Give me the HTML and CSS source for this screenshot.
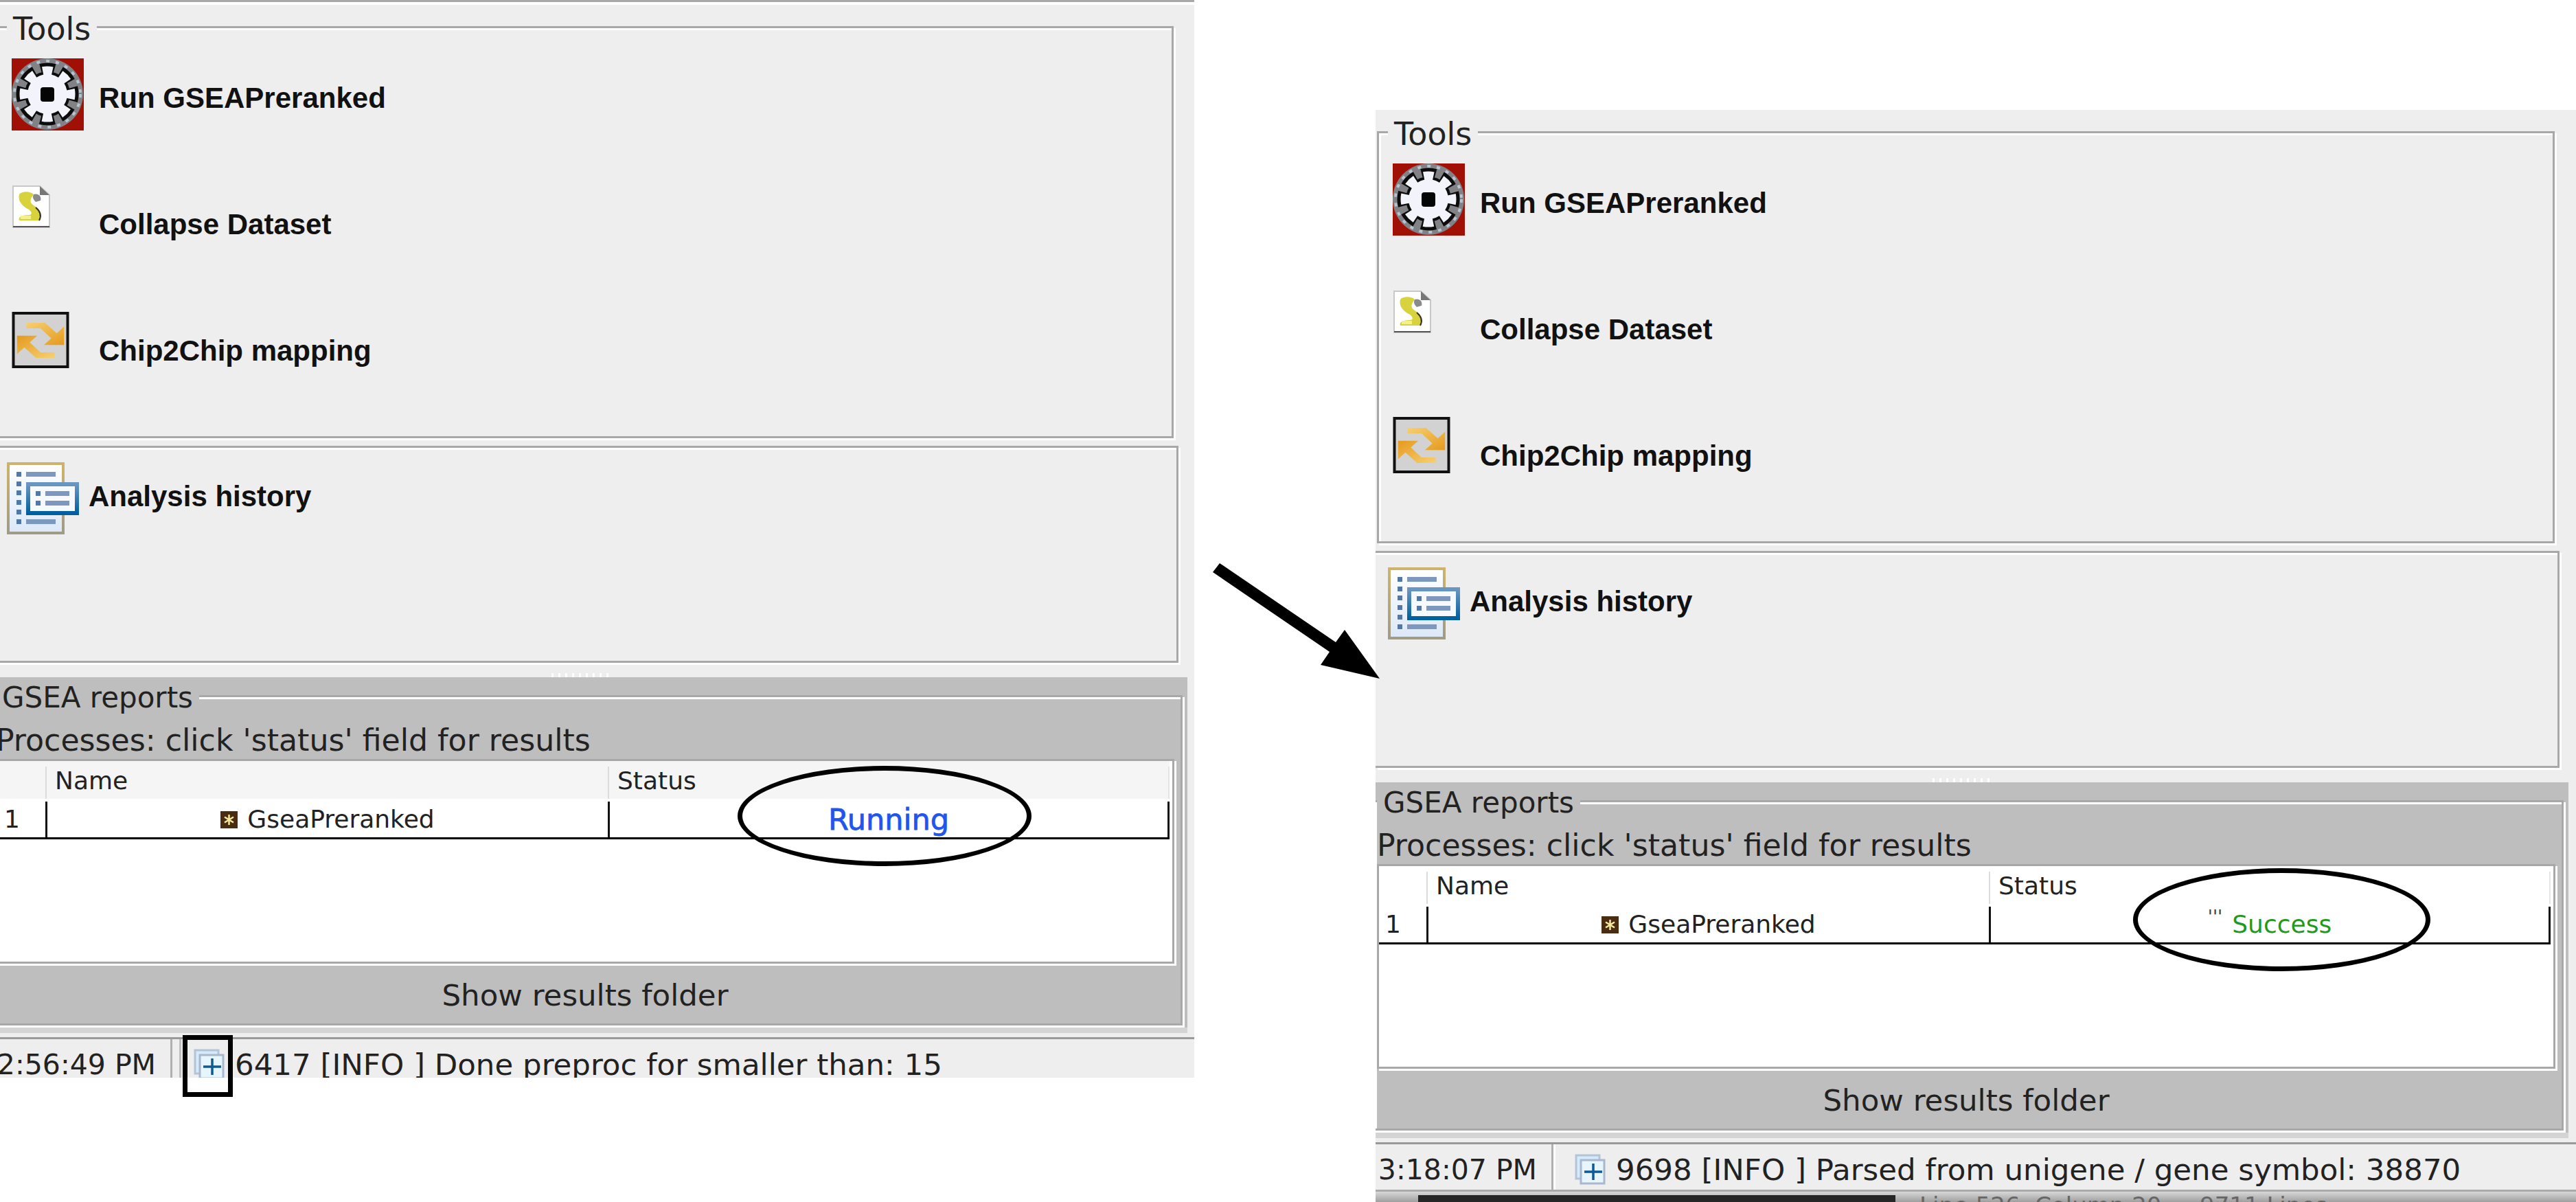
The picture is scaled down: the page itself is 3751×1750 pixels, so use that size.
FILE: index.html
```html
<!DOCTYPE html>
<html>
<head>
    <title>GSEA preranked run</title>
    <link rel="stylesheet" href="styles.css">
</head>
<body>
<svg class="defs" width="0" height="0">
    <defs>
        <linearGradient id="goldEdge" x1="0" y1="0" x2="0" y2="1">
            <stop offset="0" stop-color="#cdb36c"/>
            <stop offset="1" stop-color="#a09b86"/>
        </linearGradient>
        <linearGradient id="blueEdge" x1="0" y1="0" x2="0" y2="1">
            <stop offset="0" stop-color="#6a96c2"/>
            <stop offset="1" stop-color="#00609f"/>
        </linearGradient>
        <linearGradient id="pageFill" x1="0" y1="0" x2="0" y2="1">
            <stop offset="0" stop-color="#ffffff"/>
            <stop offset="1" stop-color="#dbe8f8"/>
        </linearGradient>
        <linearGradient id="arrowFill" x1="0" y1="0" x2="1" y2="1">
            <stop offset="0" stop-color="#f6d070"/>
            <stop offset="1" stop-color="#e59a1e"/>
        </linearGradient>
    </defs>
    <symbol id="icon-gear" viewBox="0 0 105 105">
        <rect width="105" height="105" fill="#a01005"/>
        <circle cx="52" cy="52" r="52" fill="#828286"/>
        <circle cx="52" cy="52" r="48" fill="none" stroke="#b4c4d2" stroke-width="4" stroke-dasharray="5 9"/>
        <circle cx="52" cy="52" r="33" fill="#0c0c0c"/>
        <circle cx="52" cy="52" r="39" fill="none" stroke="#0c0c0c" stroke-width="13" stroke-dasharray="21 9.630" stroke-dashoffset="10.500"/>
        <circle cx="52" cy="52" r="29" fill="#f3f3fb"/>
        <circle cx="52" cy="52" r="34" fill="none" stroke="#f3f3fb" stroke-width="13" stroke-dasharray="14 12.700" stroke-dashoffset="7"/>
        <rect x="42" y="42" width="20" height="21" rx="4" fill="#050505"/>
    </symbol>
    <symbol id="icon-scroll" viewBox="0 0 55 62">
        <path d="M1 1H40L54 14V61H1Z" fill="#fff" stroke="#c8c8c8" stroke-width="2"/>
        <path d="M40 1V14H54Z" fill="#777"/>
        <path d="M1 60H54" stroke="#555" stroke-width="2"/>
        <path d="M10 13C14 8 26 8 31 13C26 20 24 24 31 29C39 34 45 40 39 51L10 51C8 46 14 43 24 43C29 43 29 39 24 35C12 29 8 21 10 13Z" fill="#d8d23c"/>
        <path d="M31 13C37 11 43 15 41 22L34 24C30 20 29 17 31 13Z" fill="#8a8a8a"/>
        <path d="M39 51C43 44 41 38 34 32" fill="none" stroke="#333" stroke-width="2"/>
        <rect x="12" y="44" width="15" height="5" fill="#f4f08c"/>
    </symbol>
    <symbol id="icon-chip" viewBox="0 0 250 247">
        <rect x="6" y="6" width="238" height="235" fill="#d2d2d2" stroke="#111" stroke-width="12"/>
        <path id="chipArrow" d="M63 48H145L196 94L228 65V145H140L172 116L125 72H63Z" fill="url(#arrowFill)"/>
        <use href="#chipArrow" transform="rotate(180 125 125)"/>
    </symbol>
    <symbol id="icon-history" viewBox="0 0 105 105">
        <rect x="2" y="2" width="80" height="101" fill="url(#pageFill)" stroke="url(#goldEdge)" stroke-width="4"/>
        <g fill="#4f78ad">
            <rect x="14" y="14" width="7" height="7"/>
            <rect x="14" y="28" width="7" height="7"/>
            <rect x="14" y="41" width="7" height="7"/>
            <rect x="14" y="55" width="7" height="7"/>
            <rect x="14" y="69" width="7" height="7"/>
            <rect x="14" y="83" width="7" height="7"/>
        </g>
        <rect x="28" y="14" width="43" height="7" fill="#7d98bf"/>
        <rect x="28" y="83" width="43" height="7" fill="#7d98bf"/>
        <rect x="31" y="32" width="71" height="42" fill="#f6f9fe" stroke="url(#blueEdge)" stroke-width="6"/>
        <rect x="42" y="42" width="7" height="7" fill="#4f78ad"/>
        <rect x="42" y="56" width="7" height="7" fill="#4f78ad"/>
        <rect x="56" y="42" width="35" height="7" fill="#7d98bf"/>
        <rect x="56" y="56" width="35" height="7" fill="#7d98bf"/>
    </symbol>
    <symbol id="icon-task" viewBox="0 0 25 25">
        <rect width="25" height="25" fill="#4a2c12"/>
        <path d="M12.500 5V20M6 8.500L19 16.500M19 8.500L6 16.500" stroke="#f5e9a0" stroke-width="2.500"/>
    </symbol>
    <symbol id="icon-log" viewBox="0 0 45 45">
        <rect x="2" y="2" width="34" height="34" fill="#d5eafa" stroke="#b4c3d8" stroke-width="3"/>
        <rect x="9" y="9" width="34" height="34" fill="#e6f5fe" stroke="#a9b8ce" stroke-width="3"/>
        <path d="M14 26H40M27 14V38" stroke="#0f5a96" stroke-width="3.500"/>
    </symbol>
</svg>

<div class="canvas">

    <div class="win win-left">
        <div class="win-body">
            <div class="topbar"></div>

            <fieldset class="etched tools">
                <legend class="legend-tools">Tools</legend>
                <div class="tool-row">
                    <div class="tool-icon"><svg class="ico-gear"><use href="#icon-gear"/></svg></div>
                    <span class="tool-label">Run GSEAPreranked</span>
                </div>
                <div class="tool-row">
                    <div class="tool-icon"><svg class="ico-scroll"><use href="#icon-scroll"/></svg></div>
                    <span class="tool-label">Collapse Dataset</span>
                </div>
                <div class="tool-row">
                    <div class="tool-icon"><svg class="ico-chip"><use href="#icon-chip"/></svg></div>
                    <span class="tool-label">Chip2Chip mapping</span>
                </div>
            </fieldset>

            <div class="etched history">
                <svg class="ico-history"><use href="#icon-history"/></svg>
                <span class="tool-label">Analysis history</span>
            </div>

            <div class="splitter"><div class="splitter-dots"></div></div>

            <div class="reports">
                <fieldset class="etched reports-box">
                    <legend class="legend-reports">GSEA reports</legend>
                    <div class="processes">Processes: click 'status' field for results</div>
                    <div class="etched table">
                        <div class="thead">
                            <div class="th"></div>
                            <div class="th">Name</div>
                            <div class="th">Status</div>
                        </div>
                        <div class="tr">
                            <div class="td td-num">1</div>
                            <div class="td td-center"><svg class="ico-task"><use href="#icon-task"/></svg>GseaPreranked</div>
                            <div class="td td-center status-running">Running</div>
                        </div>
                    </div>
                    <div class="show-btn">Show results folder</div>
                </fieldset>
            </div>

            <div class="statusbar">
                <div class="status-time">2:56:49 PM</div>
                <div class="status-log">
                    <svg class="ico-log"><use href="#icon-log"/></svg>
                    <span>6417 [INFO ] Done preproc for smaller than: 15</span>
                </div>
            </div>
        </div>
    </div>

    <div class="win win-right">
        <div class="win-body">
            <div class="topbar"></div>

            <fieldset class="etched tools">
                <legend class="legend-tools">Tools</legend>
                <div class="tool-row">
                    <div class="tool-icon"><svg class="ico-gear"><use href="#icon-gear"/></svg></div>
                    <span class="tool-label">Run GSEAPreranked</span>
                </div>
                <div class="tool-row">
                    <div class="tool-icon"><svg class="ico-scroll"><use href="#icon-scroll"/></svg></div>
                    <span class="tool-label">Collapse Dataset</span>
                </div>
                <div class="tool-row">
                    <div class="tool-icon"><svg class="ico-chip"><use href="#icon-chip"/></svg></div>
                    <span class="tool-label">Chip2Chip mapping</span>
                </div>
            </fieldset>

            <div class="etched history">
                <svg class="ico-history"><use href="#icon-history"/></svg>
                <span class="tool-label">Analysis history</span>
            </div>

            <div class="splitter"><div class="splitter-dots"></div></div>

            <div class="reports">
                <fieldset class="etched reports-box">
                    <legend class="legend-reports">GSEA reports</legend>
                    <div class="processes">Processes: click 'status' field for results</div>
                    <div class="etched table">
                        <div class="thead">
                            <div class="th"></div>
                            <div class="th">Name</div>
                            <div class="th">Status</div>
                        </div>
                        <div class="tr">
                            <div class="td td-num">1</div>
                            <div class="td td-center"><svg class="ico-task"><use href="#icon-task"/></svg>GseaPreranked</div>
                            <div class="td td-center status-success"><span class="ticks">'''</span>Success</div>
                        </div>
                    </div>
                    <div class="show-btn">Show results folder</div>
                </fieldset>
            </div>

            <div class="statusbar">
                <div class="status-time">3:18:07 PM</div>
                <div class="status-log">
                    <svg class="ico-log"><use href="#icon-log"/></svg>
                    <span>9698 [INFO ] Parsed from unigene / gene symbol: 38870</span>
                </div>
            </div>

            <div class="behind">
                <div class="behind-dark"></div>
                <div class="behind-text">Line 526, Column 20 — 9711 Lines</div>
            </div>
        </div>
    </div>

    <!-- annotations drawn over the screenshots -->
    <div class="ring ring-left"></div>
    <div class="ring ring-right"></div>
    <div class="mark-box"></div>
    <svg class="arrow" viewBox="0 0 260 180">
        <path d="M16 0L6 13L176 129L163 148L249 168L198 97L185 115Z" fill="#000"/>
    </svg>
</div>
</body>
</html>
```

FILE: styles.css
```css
body {
    margin: 0;
    background: #fff;
    font-family: "DejaVu Sans", sans-serif;
    color: #222;
}

.defs {
    position: absolute;
}

.canvas {
    position: relative;
    width: 3751px;
    height: 1750px;
    overflow: hidden;
}

/* the two pasted application windows */
.win {
    position: absolute;
    overflow: hidden;
}

.win-left {
    left: 0;
    top: 0;
    width: 1739px;
    height: 1569px;
}

.win-left .win-body {
    margin-left: -8px;
}

.win-right {
    left: 2003px;
    top: 160px;
    width: 1748px;
    height: 1590px;
}

.win-right .win-body {
    margin-top: -7px;
}

.win-body {
    width: 1748px;
    background: #eeeeee;
    display: flex;
    flex-direction: column;
}

.topbar {
    height: 4px;
    border-top: 3px solid #a8a8a8;
    background: #fff;
}

.etched {
    box-sizing: border-box;
    border: 3px solid #a8a8a8;
    box-shadow: inset 3px 3px 0 #fff, 3px 3px 0 #fff;
}

fieldset.etched {
    margin: 0;
    min-width: 0;
}

legend {
    padding: 5px 9px 0;
    line-height: 48px;
}

.tools {
    margin: 6px 0 0 2px !important;
    width: 1715px;
    height: 625px;
    padding: 19px 0 0;
}

.legend-tools {
    margin-left: 13px;
    font-size: 46px;
    background: #eee;
}

.tool-row {
    display: flex;
    height: 184px;
}

.tool-icon {
    width: 147px;
    flex: none;
    padding-left: 20px;
    box-sizing: border-box;
}

.tool-label {
    padding-top: 34px;
    font-family: "Liberation Sans", sans-serif;
    font-weight: bold;
    font-size: 42px;
    line-height: 48px;
    color: #111;
}

.ico-gear {
    width: 105px;
    height: 105px;
}

.ico-scroll {
    width: 55px;
    height: 62px;
    margin-top: 1px;
    margin-left: 1px;
}

.ico-chip {
    width: 84px;
    height: 82px;
    margin-top: 1px;
}

.history {
    margin-top: 11px;
    width: 1724px;
    height: 316px;
    border-left: 0;
    padding: 21px 0 0 18px;
    display: flex;
    box-shadow: inset 0 3px 0 #fff, 3px 3px 0 #fff;
}

.ico-history {
    width: 105px;
    height: 105px;
    margin-right: 14px;
    flex: none;
}

.history .tool-label {
    padding-top: 26px;
}

.splitter {
    height: 21px;
    display: flex;
    justify-content: center;
    align-items: flex-end;
    padding-right: 36px;
}

.splitter-dots {
    width: 90px;
    height: 6px;
    background: repeating-linear-gradient(90deg, #fff 0 3px, transparent 3px 10px);
}

.reports {
    width: 1737px;
    height: 518px;
    box-sizing: border-box;
    padding-top: 1px;
    background: #bebebe;
    border-bottom: 8px solid #d4d4d4;
}

.reports-box {
    width: 1734px;
    height: 506px;
    margin-left: -4px !important;
    padding: 0 0 0 3px;
}

.legend-reports {
    font-size: 42px;
    background: #bebebe;
}

.processes {
    margin-top: 14px;
    font-size: 44.200px;
    line-height: 48px;
    height: 51px;
    white-space: nowrap;
}

.table {
    width: 1716px;
    height: 298px;
    background: #fff;
}

.thead,
.tr {
    display: grid;
    grid-template-columns: 69px 819px 818px;
    width: 1706px;
    font-size: 36px;
}

.thead {
    height: 55px;
    background: #f5f5f5;
}

.win-right .thead {
    background: #fff;
}

.th {
    border-left: 2px solid #dcdcdc;
    margin-top: 8px;
    padding-left: 12px;
    line-height: 42px;
    white-space: nowrap;
}

.th:first-child {
    border-left: 0;
}

.th:last-child {
    border-right: 2px solid #e4e4e4;
}

.tr {
    height: 59px;
    box-sizing: border-box;
    border-bottom: 3px solid #000;
}

.td {
    border-left: 3px solid #111;
    margin-top: 4px;
    line-height: 48px;
    display: flex;
    align-items: center;
    white-space: nowrap;
}

.td:last-child {
    border-right: 3px solid #111;
}

.td-num {
    border-left: 0;
    padding-left: 9px;
}

.td-center {
    justify-content: center;
}

.ico-task {
    width: 25px;
    height: 25px;
    margin-right: 14px;
}

.status-running {
    color: #2255ee;
    font-size: 43px;
    -webkit-text-stroke: 0.8px #2255ee;
}

.status-success {
    color: #1f9a1f;
}

.ticks {
    color: #444;
    font-size: 26px;
    line-height: 20px;
    margin: -22px 14px 0 0;
}

.show-btn {
    height: 84px;
    width: 1716px;
    text-align: center;
    font-size: 43.500px;
    line-height: 92px;
}

.statusbar {
    margin-top: 6px;
    height: 72px;
    box-sizing: border-box;
    display: flex;
    border-top: 3px solid #999;
    border-bottom: 3px solid #aaa;
    font-size: 43.500px;
    line-height: 48px;
    white-space: nowrap;
}

.status-time {
    width: 259px;
    box-sizing: border-box;
    padding: 13px 21px 0 0;
    text-align: right;
    font-size: 41px;
    border-right: 3px solid #b0b0b0;
}

.status-log {
    display: flex;
    padding: 13px 0 0 28px;
    border-left: 3px solid #fff;
}

.win-left .status-log {
    margin-left: 10px;
    padding-left: 18px;
    border-left: 3px solid #c0c0c0;
}

.ico-log {
    width: 45px;
    height: 45px;
    margin: 1px 15px 0 0;
    flex: none;
}

.behind {
    height: 20px;
    display: flex;
    background: linear-gradient(#d8d8d8, #8c8c8c);
}

.behind-dark {
    margin-left: 62px;
    width: 695px;
    margin-top: 5px;
    background: #262626;
}

.behind-text {
    margin-left: 35px;
    font-size: 34px;
    line-height: 40px;
    color: #666;
    white-space: nowrap;
}

/* annotations */
.ring {
    position: absolute;
    box-sizing: border-box;
    border: 7px solid #000;
    border-radius: 50%;
}

.ring-left {
    left: 1074px;
    top: 1115px;
    width: 428px;
    height: 146px;
}

.ring-right {
    left: 3106px;
    top: 1264px;
    width: 433px;
    height: 150px;
}

.mark-box {
    position: absolute;
    left: 266px;
    top: 1507px;
    width: 73px;
    height: 90px;
    box-sizing: border-box;
    border: 7px solid #000;
}

.arrow {
    position: absolute;
    left: 1760px;
    top: 820px;
    width: 260px;
    height: 180px;
}
```
